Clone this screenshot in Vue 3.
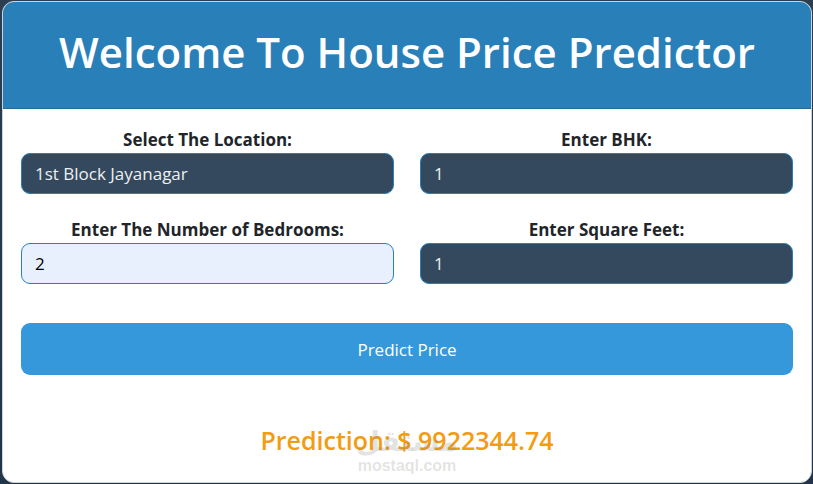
<script setup>
import { ref } from "vue";

const locations = ["1st Block Jayanagar", "1st Phase JP Nagar", "Indira Nagar"];

const location = ref("1st Block Jayanagar");
const bhk = ref("1");
const bedrooms = ref("2");
const sqft = ref("1");
const prediction = ref("9922344.74");
</script>

<template>
  <main class="page">
    <div class="card">
      <header class="card-header">
        <h1>Welcome To House Price Predictor</h1>
      </header>
      <form class="card-body" @submit.prevent>
        <div class="fields">
          <div class="field">
            <label for="location">Select The Location:</label>
            <select id="location" v-model="location">
              <option v-for="name in locations" :key="name">{{ name }}</option>
            </select>
          </div>
          <div class="field">
            <label for="bhk">Enter BHK:</label>
            <input type="text" id="bhk" v-model="bhk" />
          </div>
          <div class="field">
            <label for="bedrooms">Enter The Number of Bedrooms:</label>
            <input type="text" id="bedrooms" class="filled" v-model="bedrooms" />
          </div>
          <div class="field">
            <label for="sqft">Enter Square Feet:</label>
            <input type="text" id="sqft" v-model="sqft" />
          </div>
        </div>
        <button type="submit">Predict Price</button>
        <div class="result">
          <h2>Prediction: $ {{ prediction }}</h2>
          <div class="watermark">
            <span class="mark" lang="ar">مستقل</span>
            <span class="site">mostaql.com</span>
          </div>
        </div>
      </form>
    </div>
  </main>
</template>

<style>
body {
  margin: 0;
  background-color: #2c3e50;
}
</style>

<style scoped>
.page {
  box-sizing: border-box;
  min-height: 100vh;
  padding: 1px 1px 1px 2px;
  background: linear-gradient(#2c3e50, #22344a);
  font-family: "Segoe UI", "Open Sans", sans-serif;
  color: #212529;
}
.card {
  overflow: hidden;
  border: 1px solid #cfd3d8;
  border-radius: 12px;
  background-color: #fff;
  text-align: center;
}
.card-header {
  padding: 23px 18px 30px;
  border-bottom: 1px solid #226a9c;
  background-color: #2980b9;
}
.card-header h1 {
  margin: 0;
  font-size: 42px;
  font-weight: 600;
  line-height: 53px;
  color: #fff;
}
.card-body {
  padding: 18px;
}
.fields {
  display: grid;
  grid-template-columns: 1fr 1fr;
  gap: 23px 26px;
}
.field label {
  display: block;
  font-size: 17px;
  font-weight: 700;
  line-height: 26px;
}
.field input,
.field select {
  display: block;
  box-sizing: border-box;
  width: 100%;
  height: 41px;
  padding: 0 13px;
  border: 1px solid #2980b9;
  border-radius: 9px;
  background-color: #34495e;
  color: #ecf0f1;
  font-family: inherit;
  font-size: 17px;
  appearance: none;
}
.field input.filled {
  background-color: #e8f0fe;
  color: #000;
}
button {
  width: 100%;
  height: 52px;
  margin-top: 39px;
  border: none;
  border-radius: 9px;
  background-color: #3498db;
  color: #fff;
  font-family: inherit;
  font-size: 17px;
  cursor: pointer;
}
.result {
  position: relative;
  padding: 51px 0 9px;
}
.result h2 {
  margin: 0;
  font-size: 25px;
  font-weight: 600;
  line-height: 29px;
  color: #f39c12;
}
.watermark {
  position: absolute;
  right: 0;
  bottom: -12px;
  left: 0;
  display: flex;
  flex-direction: column;
  align-items: center;
  color: rgba(130, 130, 120, 0.22);
  pointer-events: none;
}
.mark {
  font-family: "DejaVu Sans", sans-serif;
  font-size: 28px;
  font-weight: 700;
  line-height: 28px;
}
.site {
  font-family: "Liberation Sans", Arial, sans-serif;
  font-size: 16px;
  font-weight: 700;
  line-height: 20px;
}
</style>
